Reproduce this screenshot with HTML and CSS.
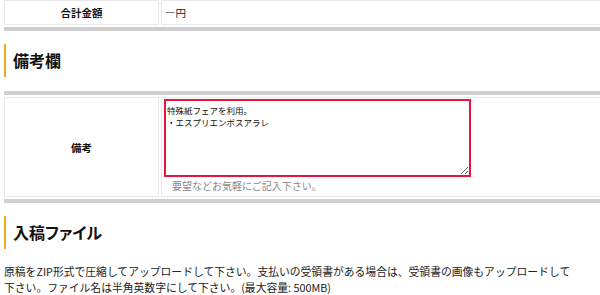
FILE: index.html
```html
<!DOCTYPE html>
<html lang="ja">
<head>
  <meta charset="UTF-8" />
  <meta name="viewport" content="width=device-width, initial-scale=1" />
  <title>入稿フォーム</title>
  <link rel="stylesheet" href="styles.css">
</head>
<body>
  <div class="page">
    <div class="form-table first">
      <table>
        <tr>
          <th>合計金額</th>
          <td class="total">—円</td>
        </tr>
      </table>
    </div>

    <h2 class="section-title">備考欄</h2>

    <div class="form-table">
      <table>
        <tr class="memo-row">
          <th>備考</th>
          <td>
            <textarea class="memo">特殊紙フェアを利用。
・エスプリエンボスアラレ</textarea>
            <div class="note">要望などお気軽にご記入下さい。</div>
          </td>
        </tr>
      </table>
    </div>

    <h2 class="section-title">入稿ファイル</h2>

    <p class="lead">原稿をZIP形式で圧縮してアップロードして下さい。支払いの受領書がある場合は、受領書の画像もアップロードして下さい。ファイル名は半角英数字にして下さい。(最大容量: 500MB)</p>
  </div>
</body>
</html>
```

FILE: styles.css
```css
html, body {
  margin: 0;
  padding: 0;
  background: #fff;
  overflow: hidden;
}
body {
  font-family: "Noto Sans CJK JP", "Noto Sans", sans-serif;
  color: #333;
  width: 600px;
}
.page {
  padding-left: 4px;
}
.form-table {
  border-top: 4px solid #cfcfcf;
  border-bottom: 4px solid #cfcfcf;
  width: 620px;
}
.form-table.first {
  margin-top: -6px;
}
.form-table table {
  border-collapse: separate;
  border-spacing: 2px;
  margin: 0 -2px;
  width: 624px;
}
th, td {
  border: 1px solid #e8e8e8;
  padding: 0 3px;
  font-size: 10.5px;
  line-height: 23px;
  vertical-align: middle;
}
th {
  width: 155px;
  box-sizing: border-box;
  text-align: center;
  font-weight: bold;
  color: #111;
}
td {
  text-align: left;
  color: #222;
}
.memo-row td {
  padding: 1px 2px 2px;
  line-height: 16px;
}
.memo {
  display: block;
  box-sizing: border-box;
  width: 307px;
  height: 78px;
  margin: 0 0 1px;
  padding: 3px 1px;
  border: 2px solid #e5173f;
  border-radius: 0;
  font-family: "Noto Sans CJK JP", sans-serif;
  font-size: 8.5px;
  line-height: 12px;
  color: #111;
  outline: none;
}
.note {
  margin-left: 8px;
  font-size: 10px;
  line-height: 16px;
  color: #888;
}
.section-title {
  margin: 12px 0 13px;
  padding-left: 7px;
  border-left: 2px solid #f5a623;
  font-size: 16px;
  line-height: 33px;
  font-weight: bold;
  color: #111;
  font-feature-settings: "palt";
}
.form-table + .section-title {
  margin-top: 13px;
  margin-bottom: 14px;
}
.lead {
  margin: 0;
  width: 572px;
  font-size: 10.8px;
  line-height: 16px;
  color: #222;
}
```
